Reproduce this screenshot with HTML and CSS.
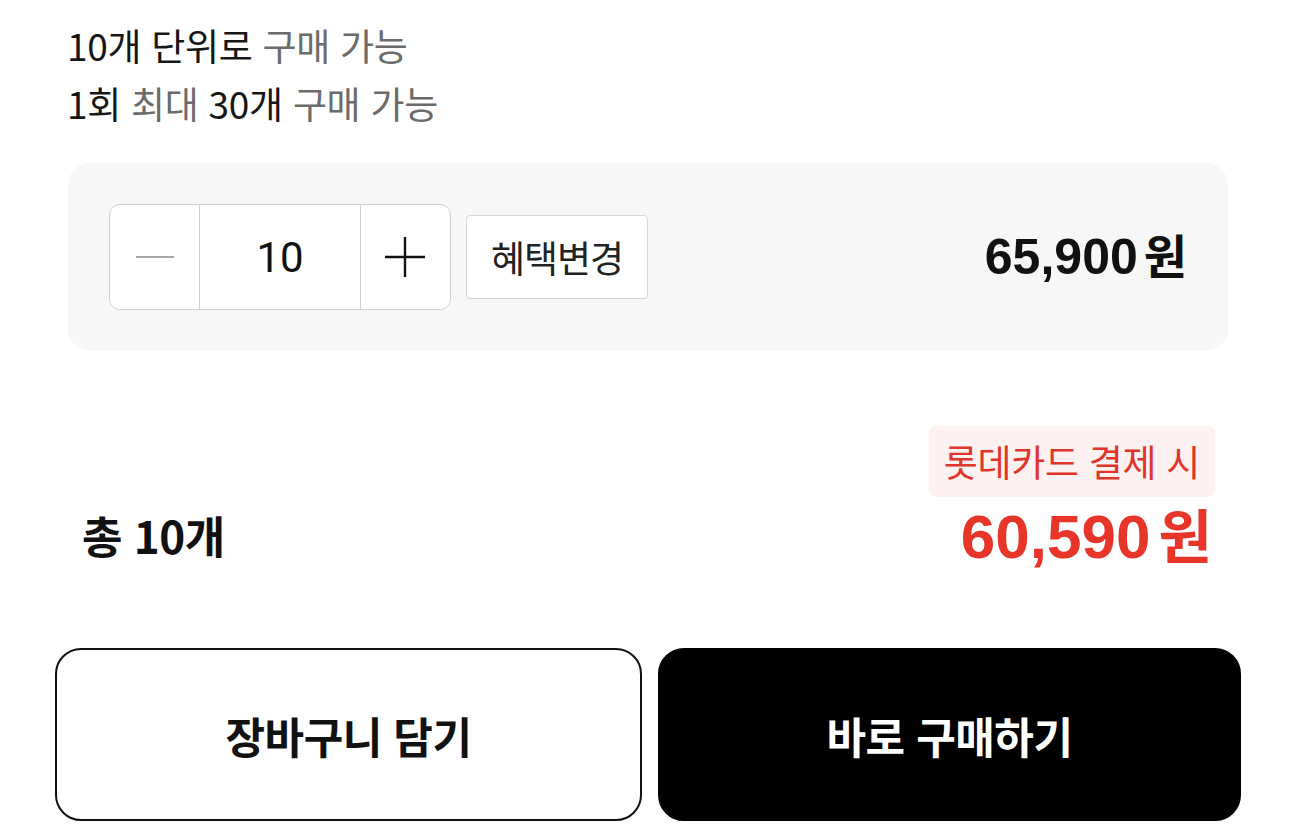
FILE: index.html
```html
<!DOCTYPE html>
<html lang="ko">
<head>
<meta charset="utf-8">
<link rel="stylesheet" href="styles.css">
</head>
<body>
<div class="page">
  <div class="info">
    <p class="line"><span class="dark">10개 단위로</span> <span class="muted">구매 가능</span></p>
    <p class="line"><span class="dark">1회</span> <span class="muted">최대</span> <span class="dark">30개</span> <span class="muted">구매 가능</span></p>
  </div>

  <div class="option-box">
    <div class="controls">
      <div class="stepper">
        <button class="step-btn minus" aria-label="감소">
          <svg width="38" height="4" viewBox="0 0 38 4"><line x1="0" y1="2" x2="38" y2="2" stroke="#888" stroke-width="1.6"/></svg>
        </button>
        <div class="qty">10</div>
        <button class="step-btn plus" aria-label="증가">
          <svg width="40" height="40" viewBox="0 0 40 40"><line x1="0" y1="20" x2="40" y2="20" stroke="#111" stroke-width="2.4"/><line x1="20" y1="0" x2="20" y2="40" stroke="#111" stroke-width="2.4"/></svg>
        </button>
      </div>
      <button class="benefit-btn">혜택변경</button>
    </div>
    <div class="item-price"><span class="num">65,900</span><span class="won">원</span></div>
  </div>

  <div class="summary">
    <div class="total">총 10개</div>
    <div class="final">
      <div class="card-badge">롯데카드 결제 시</div>
      <div class="final-price"><span class="num">60,590</span><span class="won">원</span></div>
    </div>
  </div>

  <div class="actions">
    <button class="btn btn-outline">장바구니 담기</button>
    <button class="btn btn-solid">바로 구매하기</button>
  </div>
</div>
</body>
</html>
```

FILE: styles.css
```css
* { box-sizing: border-box; }
html, body {
  margin: 0;
  padding: 0;
  background: #ffffff;
}
body {
  font-family: "Noto Sans CJK KR", "Noto Sans", sans-serif;
  color: #111;
  width: 1296px;
  height: 824px;
  overflow: hidden;
}
button {
  font-family: inherit;
  cursor: pointer;
}
.info {
  padding: 16px 0 0 67px;
}
.line {
  margin: 0;
  font-size: 37px;
  line-height: 58px;
  height: 58px;
  letter-spacing: -0.3px;
}
.dark { color: #161616; }
.muted { color: #6b6b6b; }

.option-box {
  margin: 31px 68px 0 68px;
  height: 188px;
  background: #f7f7f7;
  border-radius: 22px;
  padding: 0 41px;
  display: flex;
  align-items: center;
  justify-content: space-between;
}
.controls {
  display: flex;
  align-items: center;
  gap: 15px;
}
.stepper {
  display: flex;
  width: 342px;
  height: 106px;
  background: #fff;
  border: 1px solid #cfcfcf;
  border-radius: 11px;
  overflow: hidden;
}
.step-btn {
  width: 90px;
  border: none;
  background: #fff;
  display: flex;
  align-items: center;
  justify-content: center;
  padding: 0;
}
.qty {
  width: 162px;
  border-left: 1px solid #cfcfcf;
  border-right: 1px solid #cfcfcf;
  display: flex;
  align-items: center;
  justify-content: center;
  font-family: "Roboto", "Noto Sans", sans-serif;
  font-size: 42px;
  color: #111;
}
.benefit-btn {
  height: 84px;
  width: 182px;
  background: #fff;
  border: 1px solid #d6d6d6;
  border-radius: 4px;
  font-size: 37px;
  color: #222;
  padding: 0;
  letter-spacing: -1px;
  white-space: nowrap;
}
.item-price {
  display: flex;
  align-items: baseline;
  height: 60px;
  line-height: 60px;
  margin-bottom: 6px;
  font-weight: 700;
  font-size: 50px;
  color: #111;
}
.num {
  font-family: "Liberation Sans", sans-serif;
  font-weight: 700;
}
.won {
  font-family: "Noto Sans CJK KR", sans-serif;
  font-weight: 700;
  font-size: 0.94em;
  margin-left: 6px;
}

.summary {
  margin-top: 75px;
  padding: 0 81px 0 82px;
  display: flex;
  justify-content: space-between;
  align-items: flex-end;
}
.total {
  font-size: 44px;
  font-weight: 700;
  line-height: 64px;
  height: 64px;
  margin-bottom: 6px;
  letter-spacing: -0.5px;
}
.final {
  display: flex;
  flex-direction: column;
  align-items: flex-end;
}
.card-badge {
  height: 71px;
  padding: 0 15px;
  background: #fdf1f1;
  border-radius: 7px;
  color: #e0352b;
  font-size: 37px;
  line-height: 71px;
  letter-spacing: -0.3px;
  white-space: nowrap;
}
.final-price {
  display: flex;
  align-items: baseline;
  margin-top: 0;
  margin-bottom: 4px;
  margin-right: 3px;
  height: 72px;
  line-height: 72px;
  font-weight: 700;
  font-size: 62px;
  color: #e8352a;
}
.final-price .won { margin-left: 8px; }

.actions {
  margin-top: 75px;
  padding: 0 55px;
  display: grid;
  grid-template-columns: 587px 583px;
  gap: 16px;
}
.btn {
  height: 173px;
  border-radius: 26px;
  font-size: 43px;
  font-weight: 700;
  letter-spacing: -0.5px;
}
.btn-outline {
  background: #fff;
  border: 2px solid #111;
  color: #111;
}
.btn-solid {
  background: #000;
  border: 2px solid #000;
  color: #fff;
}
```
